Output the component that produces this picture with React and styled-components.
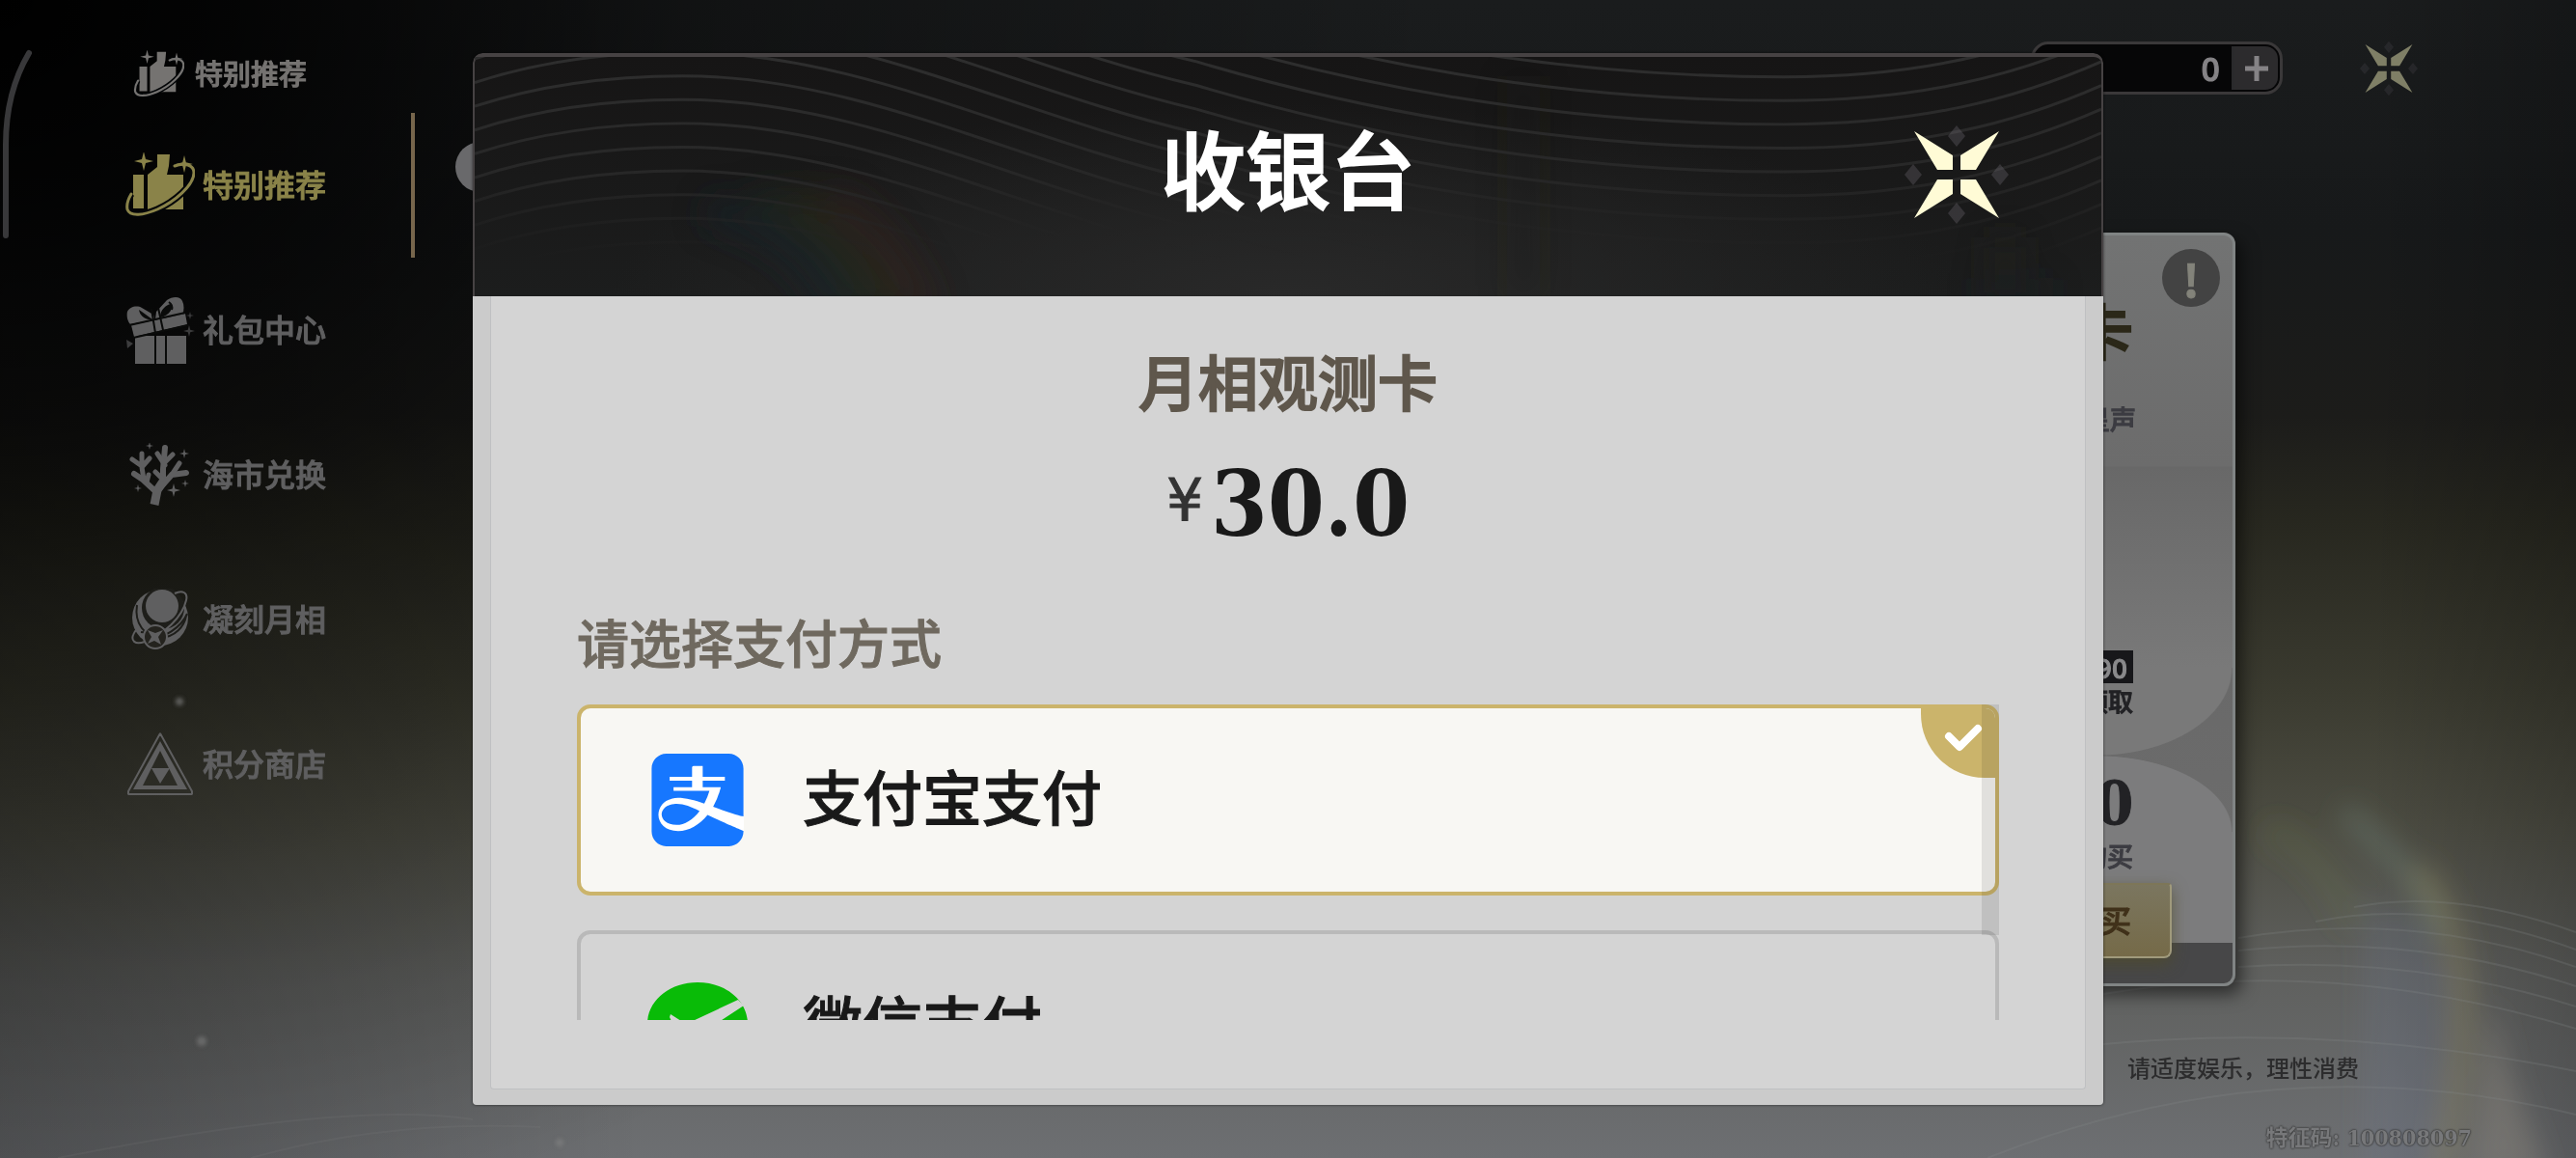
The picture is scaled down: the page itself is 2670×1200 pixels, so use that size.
import React, { useState } from 'react'
import styled, { createGlobalStyle } from 'styled-components'
import { SiAlipay } from 'react-icons/si'

const payMethods = [
    { id: 'alipay', name: '支付宝支付' },
    { id: 'wechat', name: '微信支付' },
]

const menuItems = [
    { id: 'special', name: '特别推荐', icon: <ThumbIcon /> },
    { id: 'gift', name: '礼包中心', icon: <GiftIcon /> },
    { id: 'exchange', name: '海市兑换', icon: <CoralIcon /> },
    { id: 'moon', name: '凝刻月相', icon: <MoonIcon /> },
    { id: 'points', name: '积分商店', icon: <TriangleIcon /> },
]

function star(x, y, r) {
    const s = r / 5
    return `M${x} ${y - r}L${x + s} ${y - s}L${x + r} ${y}L${x + s} ${y + s}L${x} ${y + r}L${x - s} ${y + s}L${x - r} ${y}L${x - s} ${y - s}Z`
}

function ThumbIcon({ width = 73, height = 68 }) {
    const ring = 'M52 14C62 10 72 13 72 21C72 34 52 51 34 59C20 65 6 67 3 59C2 54 4 48 7 43'
    return (
        <svg width={width} height={height} viewBox="0 0 73 68" fill="none" aria-hidden="true">
            <path fill="currentColor" d="M9 23H20V58H9ZM24 23L34 15V2H47L46 14L44 23H61V59H24Z" />
            <path d={ring} stroke="#040608" strokeWidth="7" />
            <path d={ring} stroke="currentColor" strokeWidth="3" strokeLinecap="round" />
            <path fill="currentColor" d={star(20, 9, 10) + star(62, 12, 9)} />
        </svg>
    )
}

function GiftIcon() {
    return (
        <svg width="72" height="70" viewBox="0 0 72 70" fill="none" aria-hidden="true">
            <path fill="currentColor" d="M10 41H63V70H10ZM6 30L62 18L64 29L9 42Z" />
            <path fill="currentColor" d="M2 16C4 11 12 9 17 12L29 19L30 24L5 29C2 26 1 20 2 16ZM31 24L32 16L43 4C49 0 57 0 59 5C61 9 61 15 59 19Z" />
            <path fill="#0a0b0a" d="M14 14C15 20 20 25 28 24L17 16ZM36 22C36 14 42 9 47 8C50 12 46 20 36 22Z" />
            <path stroke="#0a0b0a" strokeWidth="2" d="M4 30L62 17M8 43L66 30M31 41V70M42 41V70M27 13L31 38M34 12L39 35M45 6C48 8 49 11 48 14" />
            <path fill="currentColor" opacity="0.6" d={star(66, 36, 6) + star(67, 20, 4)} />
            <path fill="currentColor" opacity="0.6" d="M1 45L8 49L2 54Z" />
        </svg>
    )
}

function CoralIcon() {
    return (
        <svg width="64" height="66" viewBox="0 0 64 66" fill="none" stroke="currentColor" strokeLinecap="round" strokeLinejoin="round" aria-hidden="true">
            <path strokeWidth="9" strokeLinecap="butt" d="M26 64L29 49L35 40" />
            <path strokeWidth="6" d="M29 48L35 38V27L37 5M29 50L44 33L59 31M28 51L14 38L5 32" />
            <path strokeWidth="5" d="M44 33L52 21M37 23L29 11M37 20L45 12M34 37L27 30M18 41L20 33M15 38L13 25V11M13 24L3 17M14 24L21 16" />
            <path fill="currentColor" stroke="none" d={star(57, 11, 5) + star(46, 49, 7) + star(58, 42, 4) + star(9, 47, 4) + star(21, 3, 4)} />
        </svg>
    )
}

function MoonIcon() {
    return (
        <svg width="60" height="64" viewBox="0 0 60 64" fill="none" aria-hidden="true">
            <circle cx="30" cy="30" r="29" fill="currentColor" />
            <circle cx="33" cy="20" r="22" fill="#1e1e1a" />
            <path stroke="#1e1e1a" strokeWidth="2" d="M6 17C3 36 14 50 30 51C46 50 55 39 57 28M10 45C28 48 50 32 55 14M16 53C34 52 52 40 58 26" />
            <circle cx="32" cy="18" r="17" fill="currentColor" />
            <path stroke="currentColor" strokeWidth="2" d="M45 5C53 1 59 4 57 12C53 30 34 47 14 55C3 59 0 53 2 48C3 45 4 44 6 42" />
            <circle cx="25" cy="50" r="12" fill="#24231e" stroke="currentColor" strokeWidth="2" />
            <path fill="currentColor" d="M17 43L25 46L33 43L28 50L31 58L24 54L17 57L21 50Z" />
        </svg>
    )
}

function TriangleIcon() {
    return (
        <svg width="70" height="66" viewBox="0 0 70 66" fill="none" aria-hidden="true">
            <path stroke="currentColor" strokeWidth="2" strokeLinejoin="bevel" d="M35 1L68 61V64H2V61Z" />
            <path fill="currentColor" fillRule="evenodd" d="M35 9L63 59H7ZM35 19L17 55H53Z" />
            <path fill="currentColor" d="M26 37H45L35 53Z" />
        </svg>
    )
}

// four blades pointing to the corners, four faint diamonds on the axes
function CrossIcon({ width, height }) {
    return (
        <svg width={width} height={height} viewBox="-54 -54 108 108" aria-hidden="true">
            <g fill="#8a8490" opacity="0.25">
                <path d="M0 -51L9 -40L0 -29L-9 -40ZM0 51L9 40L0 29L-9 40Z" />
                <path d="M-54 0L-45 -11L-36 0L-45 11ZM54 0L45 -11L36 0L45 11Z" />
            </g>
            <path fill="currentColor" d="M-44 -45L-4 -20V-5H-20ZM44 -45L4 -20V-5H20ZM-44 45L-4 20V5H-20ZM44 45L4 20V5H20Z" />
        </svg>
    )
}

function WechatPayIcon() {
    return (
        <svg width="104" height="90" viewBox="0 0 104 90" aria-hidden="true">
            <path fill="#09bb07" d="M52 0C81 0 104 19 104 43C104 68 81 87 52 87C46 87 40 86 34 84L20 90V78C8 70 0 58 0 43C0 19 23 0 52 0Z" />
            <path fill="#d4d4d4" d="M24 33L35 40Q41 43 47 40L94 18L100 24L42 62Q37 65 34 59L23 36Z" />
        </svg>
    )
}

function HeaderArt() {
    const lines = []
    for (let i = -10; i < 8; i++) lines.push(i * 25)
    return (
        <ArtLayer viewBox="0 0 1690 252" preserveAspectRatio="none" aria-hidden="true">
            <defs>
                <filter id="soft" x="-50%" y="-50%" width="200%" height="200%">
                    <feGaussianBlur stdDeviation="16" />
                </filter>
                <linearGradient id="fade" x1="0" y1="0" x2="0" y2="252" gradientUnits="userSpaceOnUse">
                    <stop offset="0" stopColor="#2e2e2e" />
                    <stop offset="0.5" stopColor="#272727" />
                    <stop offset="0.85" stopColor="#222" stopOpacity="0" />
                </linearGradient>
            </defs>
            <g fill="none" filter="url(#soft)" strokeWidth="34" opacity="0.5">
                <path stroke="#18222a" d="M240 160C310 180 350 210 375 270" />
                <path stroke="#1b2a20" d="M290 150C350 170 380 210 405 270" />
                <path stroke="#2c2a18" d="M330 150C380 170 415 210 435 270" />
                <path stroke="#36201c" d="M370 150C410 170 445 210 470 270" />
                <path stroke="#261d17" strokeOpacity="0.5" d="M1090 20V252" />
                <path stroke="#24201b" d="M1590 190V252" />
                <path stroke="#16202a" strokeOpacity="0.5" d="M1560 250H1640" />
            </g>
            <g fill="none" stroke="url(#fade)" strokeWidth="3">
                {lines.map((y) => (
                    <path key={y} d={`M0 ${y + 52}Q96 ${y + 20} 216 ${y + 20}C400 ${y + 20} 560 ${y + 110} 750 ${y + 155}C950 ${y + 215} 1150 ${y + 246} 1360 ${y + 246}C1500 ${y + 246} 1600 ${y + 220} 1690 ${y + 180}`} />
                ))}
            </g>
        </ArtLayer>
    )
}

function PageArt() {
    return (
        <ArtLayer viewBox="0 0 2670 1200" preserveAspectRatio="none" aria-hidden="true">
            <defs>
                <filter id="haze" x="-50%" y="-50%" width="200%" height="200%">
                    <feGaussianBlur stdDeviation="14" />
                </filter>
                <filter id="spark" x="-50%" y="-50%" width="200%" height="200%">
                    <feGaussianBlur stdDeviation="2" />
                </filter>
            </defs>
            <g fill="none" filter="url(#haze)">
                <path stroke="#76864f" strokeOpacity="0.18" strokeWidth="26" d="M2350 860C2400 880 2430 930 2440 960" />
                <path fill="#6d7f96" fillOpacity="0.2" d="M2450 930L2510 950L2540 1010L2530 1220H2450Z" />
                <path stroke="#7f9a90" strokeOpacity="0.3" strokeWidth="20" d="M2430 840C2470 880 2515 910 2528 970" />
                <path stroke="#a3975e" strokeOpacity="0.3" strokeWidth="24" d="M2505 900C2565 970 2560 1080 2530 1220" />
                <path fill="#9a9288" fillOpacity="0.35" d="M2582 1040L2600 1110L2640 1220H2560Z" />
            </g>
            <g fill="none" stroke="#8a8c8c" strokeWidth="2" strokeOpacity="0.22">
                <path d="M2180 1030Q2420 990 2670 1066M2180 1082Q2420 1060 2670 1110M2060 1200Q2360 1080 2670 1155" />
                <path d="M2320 1002Q2500 990 2670 1043M2320 985Q2500 966 2670 1022M2320 972Q2500 942 2670 1002M2400 955Q2520 930 2670 984M2440 940Q2540 920 2670 966" />
                <path d="M60 1200Q360 1140 490 1160M260 1200Q400 1160 560 1168" strokeOpacity="0.12" />
            </g>
            <g fill="#8a8a8a" filter="url(#spark)">
                <circle cx="186" cy="727" r="4" opacity="0.6" />
                <circle cx="209" cy="1079" r="5" opacity="0.5" />
                <circle cx="580" cy="1184" r="4" opacity="0.5" />
            </g>
            <path d="M30 55C14 82 6 114 6 150V244" fill="none" stroke="#38383a" strokeWidth="6" strokeLinecap="round" />
        </ArtLayer>
    )
}

function Sidebar() {
    return (
        <SidebarStyled>
            <SidebarTitle>
                <ThumbIcon width={53} height={50} />
                <MenuText>特别推荐</MenuText>
            </SidebarTitle>
            <nav>
                {menuItems.map((item, i) => (
                    <MenuLink key={item.id} href={'#' + item.id} $active={i === 0}>
                        <MenuIcon>{item.icon}</MenuIcon>
                        <MenuText>{item.name}</MenuText>
                    </MenuLink>
                ))}
            </nav>
        </SidebarStyled>
    )
}

function ProductCard() {
    return (
        <CardStyled>
            <InfoButton type="button" aria-label="说明">!</InfoButton>
            <CardTitle>月相观测卡</CardTitle>
            <CardNote>星声</CardNote>
            <CardBadge>90</CardBadge>
            <CardClaim>领取</CardClaim>
            <CardPrice>30</CardPrice>
            <CardLimit>购买</CardLimit>
            <BuyButton type="button">购买</BuyButton>
        </CardStyled>
    )
}

function Cashier() {
    const [method, setMethod] = useState('alipay')
    return (
        <Overlay>
            <Dialog role="dialog" aria-labelledby="cashier-title">
                <DialogHeader>
                    <HeaderArt />
                    <DialogTitle id="cashier-title">收银台</DialogTitle>
                    <DialogClose type="button" aria-label="关闭">
                        <CrossIcon width={108} height={108} />
                    </DialogClose>
                </DialogHeader>
                <DialogBody>
                    <Panel>
                        <ProductName>月相观测卡</ProductName>
                        <Price><small>¥</small>30.0</Price>
                        <PayHint>请选择支付方式</PayHint>
                        <PayArea>
                            <PayList>
                                {payMethods.map((m) => (
                                    <PayOption key={m.id} $checked={method === m.id}>
                                        <input
                                            type="radio"
                                            name="pay"
                                            value={m.id}
                                            checked={method === m.id}
                                            onChange={() => setMethod(m.id)}
                                        />
                                        <PayLogo>
                                            {m.id === 'alipay' ? <AlipayLogo><SiAlipay size={96} /></AlipayLogo> : <WechatPayIcon />}
                                        </PayLogo>
                                        <PayName>{m.name}</PayName>
                                        {method === m.id && (
                                            <CheckCorner>
                                                <svg width="42" height="30" viewBox="0 0 42 30" fill="none" aria-hidden="true">
                                                    <path d="M6 14L17 25L36 6" stroke="#fff" strokeWidth="8" strokeLinecap="round" strokeLinejoin="round" />
                                                </svg>
                                            </CheckCorner>
                                        )}
                                    </PayOption>
                                ))}
                            </PayList>
                            <ScrollThumb />
                        </PayArea>
                    </Panel>
                </DialogBody>
            </Dialog>
        </Overlay>
    )
}

function App() {
    return (
        <>
            <GlobalStyle />
            <Page>
                <PageArt />
                <Sidebar />
                <Main>
                    <TopBar>
                        <Currency>
                            <span>0</span>
                            <AddButton type="button" aria-label="充值">
                                <svg width="26" height="28" viewBox="0 0 26 28" aria-hidden="true">
                                    <path d="M13 1V27M1 14H25" stroke="currentColor" strokeWidth="5" />
                                </svg>
                            </AddButton>
                        </Currency>
                        <PageClose type="button" aria-label="返回">
                            <CrossIcon width={60} height={60} />
                        </PageClose>
                    </TopBar>
                    <PrevDot type="button" aria-label="上一页" />
                    <ProductCard />
                    <Tip>请适度娱乐，理性消费</Tip>
                    <UserCode>特征码: 100808097</UserCode>
                </Main>
                <Cashier />
            </Page>
        </>
    )
}

/* the stroke thickens the regular cut to a medium weight */
const GlobalStyle = createGlobalStyle`
    * {
        box-sizing: border-box;
    }
    body {
        margin: 0;
        background: #101214;
        font-family: "Noto Sans CJK SC", "Noto Sans", sans-serif;
        font-weight: 500;
        -webkit-text-stroke: 1px currentColor;
    }
    h1, h2, p {
        margin: 0;
    }
    button {
        font: inherit;
        border: 0;
        padding: 0;
        background: none;
        cursor: pointer;
    }
    svg {
        display: block;
    }
`;

const Page = styled.div`
    position: relative;
    display: flex;
    min-height: 100vh;
    overflow: hidden;
    background:
        radial-gradient(ellipse 1500px 1300px at 0 0, #000 0%, rgba(0, 0, 0, 0.85) 14%, rgba(0, 0, 0, 0.35) 48%, transparent 100%),
        linear-gradient(90deg, rgba(0, 0, 0, 0.25), transparent 25%, transparent 92%, rgba(0, 0, 0, 0.2)),
        linear-gradient(180deg, #1a1c1d 0%, #17191a 20%, #1c1c1a 36%, #27271f 45%, #3b3b30 60%, #4c4c42 71%, #5f605e 84%, #6d6f72 100%);
`;

const ArtLayer = styled.svg`
    position: absolute;
    inset: 0;
    width: 100%;
    height: 100%;
    pointer-events: none;
`;

const SidebarStyled = styled.aside`
    position: relative;
    flex: none;
    width: 430px;
    padding-top: 52px;
`;

const SidebarTitle = styled.h2`
    display: flex;
    align-items: center;
    gap: 11px;
    height: 50px;
    margin-bottom: 15px;
    padding-left: 138px;
    font-size: 29px;
    font-weight: 500;
    color: #757371;
`;

const MenuLink = styled.a`
    display: flex;
    align-items: center;
    gap: 8px;
    height: 150px;
    padding-left: 129px;
    border-right: 4px solid ${props => props.$active ? '#77664c' : 'transparent'};
    font-size: 32px;
    text-decoration: none;
    color: ${props => props.$active ? '#8a8349' : '#5f5f60'};
`;

const MenuIcon = styled.span`
    display: flex;
    justify-content: center;
    width: 73px;
`;

const MenuText = styled.span`
    padding-bottom: 5px;
`;

const Main = styled.main`
    position: relative;
    display: flex;
    flex-direction: column;
    flex: 1;
    min-width: 0;
`;

const TopBar = styled.header`
    display: flex;
    justify-content: flex-end;
    align-items: center;
    gap: 80px;
    padding: 43px 164px 0 0;
    height: 98px;
`;

const Currency = styled.div`
    display: flex;
    justify-content: flex-end;
    align-items: center;
    gap: 12px;
    width: 261px;
    height: 55px;
    padding: 2px;
    border: 3px solid #3a3839;
    border-radius: 18px;
    background: #060607;
    font-size: 34px;
    line-height: 45px;
    color: #858386;
    span {
        padding-bottom: 3px;
    }
`;

const AddButton = styled.button`
    display: flex;
    justify-content: center;
    align-items: center;
    width: 48px;
    height: 45px;
    border-left: 3px solid #2a2a2c;
    border-radius: 0 13px 13px 0;
    background: #2c2b2d;
    color: #858386;
`;

const PageClose = styled.button`
    color: #7f7f66;
    g {
        opacity: 0.12;
    }
`;

const PrevDot = styled.button`
    width: 52px;
    height: 52px;
    margin: 49px 0 42px 42px;
    border-radius: 50%;
    background: #69696b;
`;

const CardStyled = styled.section`
    position: relative;
    display: flex;
    flex-direction: column;
    align-items: flex-end;
    align-self: flex-end;
    width: 522px;
    height: 781px;
    margin-right: 353px;
    padding: 53px 103px 0 0;
    border: 3px solid #808484;
    border-radius: 12px;
    background:
        linear-gradient(#474748, #474748) bottom / 100% 42px no-repeat,
        linear-gradient(180deg, #727373 0, #6c6c6c 239px, #686868 240px, #797979 448px) top / 100% 448px no-repeat,
        radial-gradient(ellipse 140px 91px at 376px 448px, #797979 99%, transparent 100%),
        radial-gradient(ellipse 140px 79px at 376px 618px, #7c7c7d 99%, transparent 100%),
        linear-gradient(180deg, #696969 448px, #6c6c6c 618px, #7c7c7d 618px);
    box-shadow: 6px 8px 18px rgba(0, 0, 0, 0.55);
    color: #222225;
`;

const InfoButton = styled.button`
    position: absolute;
    top: 14px;
    right: 13px;
    width: 60px;
    height: 60px;
    border-radius: 50%;
    background: #434343;
    font-size: 46px;
    font-weight: 700;
    line-height: 56px;
    color: #83837a;
`;

const CardTitle = styled.h2`
    font-size: 62px;
    font-weight: 500;
    line-height: 88px;
    -webkit-text-stroke-width: 2px;
    color: #2b2819;
`;

const CardNote = styled.p`
    margin: 29px -3px 220px 0;
    font-size: 27px;
    line-height: 40px;
    color: #3c3c42;
`;

const CardBadge = styled.p`
    padding: 0 6px;
    font-size: 28px;
    line-height: 34px;
    background: #17171a;
    color: #8a8a8c;
`;

const CardClaim = styled.p`
    font-size: 26px;
    line-height: 36px;
`;

const CardPrice = styled.p`
    margin-top: 49px;
    font-family: "DejaVu Serif Condensed", "DejaVu Serif", serif;
    font-size: 62px;
    font-weight: 700;
    line-height: 80px;
`;

const CardLimit = styled.p`
    font-size: 27px;
    line-height: 28px;
    color: #3c3c42;
`;

const BuyButton = styled.button`
    width: 280px;
    height: 78px;
    margin: 14px -40px 0 0;
    padding: 0 40px 4px 0;
    border: 2px solid #a09a7c;
    border-top-color: #7d7658;
    border-radius: 4px 4px 8px 4px;
    background: linear-gradient(180deg, #7b765f, #756a48);
    box-shadow: 0 6px 16px rgba(80, 76, 40, 0.7);
    font-size: 32px;
    text-align: right;
    color: #40311a;
`;

const Tip = styled.p`
    align-self: flex-end;
    margin: 64px 225px 0 0;
    font-size: 24px;
    line-height: 40px;
    -webkit-text-stroke-width: 0;
    color: #2c2c2d;
`;

const UserCode = styled.p`
    align-self: flex-end;
    margin: 38px 108px 0 0;
    font-family: "DejaVu Serif Condensed", "Noto Sans CJK SC", serif;
    font-size: 23px;
    font-weight: 700;
    line-height: 30px;
    color: #77787a;
    -webkit-text-stroke-width: 0;
    text-shadow: 0 0 2px #333, 0 0 2px #333;
`;

const Overlay = styled.div`
    position: absolute;
    inset: 0;
    display: flex;
    align-items: center;
    padding: 0 490px;
`;

const Dialog = styled.div`
    flex: 1;
    min-width: 0;
    border-radius: 10px 10px 4px 4px;
    overflow: hidden;
    box-shadow: 0 0 3px rgba(0, 0, 0, 0.6);
`;

const DialogHeader = styled.header`
    position: relative;
    display: grid;
    grid-template-columns: 1fr auto 1fr;
    align-items: center;
    height: 252px;
    padding: 0 96px 4px;
    border: 2px solid #464243;
    border-top-width: 4px;
    border-bottom: 0;
    border-radius: 10px 10px 0 0;
    background: radial-gradient(ellipse 700px 200px at 50% 100%, #292929, transparent), linear-gradient(180deg, #161515, #1c1d1d);
`;

const DialogTitle = styled.h1`
    position: relative;
    grid-column: 2;
    padding-bottom: 18px;
    font-size: 88px;
    font-weight: 500;
    line-height: 120px;
    -webkit-text-stroke-width: 2px;
    color: #fff;
`;

const DialogClose = styled.button`
    position: relative;
    justify-self: end;
    color: #fffbd6;
`;

const DialogBody = styled.div`
    padding: 0 18px 16px;
    background: #cbcbcb;
`;

const Panel = styled.div`
    display: flex;
    flex-direction: column;
    align-items: center;
    padding: 47px 89px 71px;
    border: solid #bfc0c2;
    border-width: 0 1px 1px;
    border-radius: 0 0 4px 4px;
    background: #d4d4d4;
`;

const ProductName = styled.h2`
    font-size: 62px;
    font-weight: 500;
    line-height: 80px;
    -webkit-text-stroke-width: 2px;
    color: #5f574c;
`;

const Price = styled.p`
    display: flex;
    align-items: center;
    gap: 8px;
    height: 100px;
    margin-top: 38px;
    font-family: "DejaVu Serif Condensed", "DejaVu Serif", serif;
    font-size: 94px;
    font-weight: 700;
    line-height: 100px;
    -webkit-text-stroke-width: 0;
    color: #191919;
    small {
        padding-bottom: 8px;
        font-family: "DejaVu Sans", sans-serif;
        font-size: 60px;
        font-weight: 400;
        -webkit-text-stroke-width: 1px;
        color: #333;
    }
`;

const PayHint = styled.p`
    align-self: flex-start;
    margin: 61px 0 33px;
    font-size: 54px;
    line-height: 64px;
    color: #6f695f;
`;

const PayArea = styled.div`
    position: relative;
    width: 100%;
`;

const PayList = styled.div`
    display: flex;
    flex-direction: column;
    gap: 36px;
    max-height: 327px;
    overflow-y: auto;
    scrollbar-width: none;
`;

const PayOption = styled.label`
    position: relative;
    display: flex;
    flex: none;
    align-items: center;
    height: 198px;
    padding-left: 69px;
    border: 4px solid ${props => props.$checked ? '#cbb46b' : '#b9b9b9'};
    border-radius: 14px;
    background: ${props => props.$checked ? '#f8f7f3' : 'transparent'};
    overflow: hidden;
    cursor: pointer;
    input {
        position: absolute;
        opacity: 0;
    }
`;

const PayLogo = styled.span`
    display: flex;
    justify-content: center;
    width: 104px;
    margin-right: 57px;
`;

const PayName = styled.span`
    padding-bottom: 10px;
    font-size: 62px;
    line-height: 80px;
    color: #191919;
`;

const AlipayLogo = styled.span`
    border-radius: 20px;
    background: #fff;
    color: #1677ff;
`;

const CheckCorner = styled.span`
    position: absolute;
    top: 0;
    right: 0;
    width: 77px;
    height: 72px;
    padding: 15px 0 0 23px;
    border-bottom-left-radius: 66px;
    background: #cbb46b;
`;

const ScrollThumb = styled.span`
    position: absolute;
    top: 0;
    right: 0;
    width: 18px;
    height: 239px;
    background: rgba(0, 0, 0, 0.09);
    pointer-events: none;
`;

export default App
